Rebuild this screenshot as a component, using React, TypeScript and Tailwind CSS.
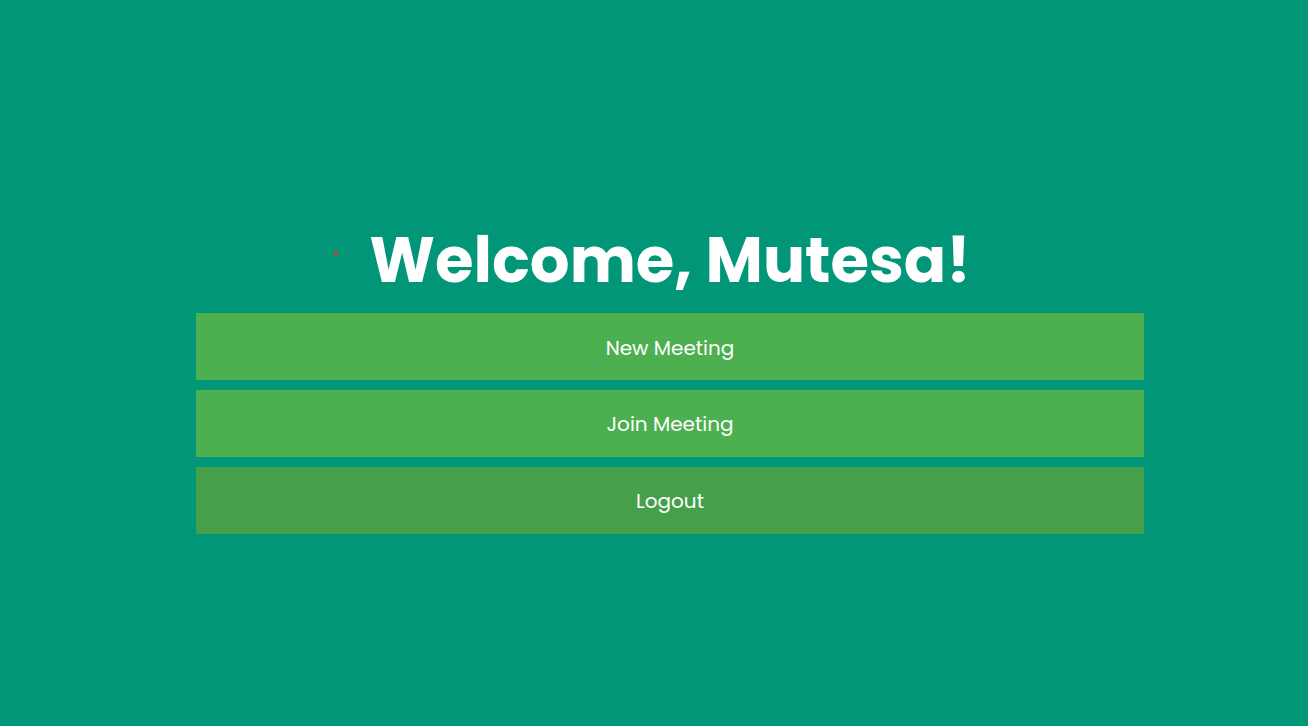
export default function App() {
  const btn =
    "w-full h-[67px] flex items-center justify-center text-white text-[20px] font-normal";
  return (
    <div
      className="min-h-screen w-full bg-[#009677] relative"
      style={{ fontFamily: "Poppins, Inter, 'Noto Sans', sans-serif" }}
    >
      <span className="absolute left-[334px] top-[251px] w-[4px] h-[4px] rounded-full bg-[#f0302a]" />
      <div className="ml-[196px] w-[948px] pt-[223px] flex flex-col">
        <h1 className="text-center text-white font-bold text-[62.5px] leading-[75px]">
          Welcome, Mutesa!
        </h1>
        <div className="mt-[15px] flex flex-col gap-[10px]">
          <button className={`${btn} bg-[#4caf50] pt-[2px]`}>New Meeting</button>
          <button className={`${btn} bg-[#4caf50]`}>Join Meeting</button>
          <button className={`${btn} bg-[#45a049]`}>Logout</button>
        </div>
      </div>
    </div>
  );
}
